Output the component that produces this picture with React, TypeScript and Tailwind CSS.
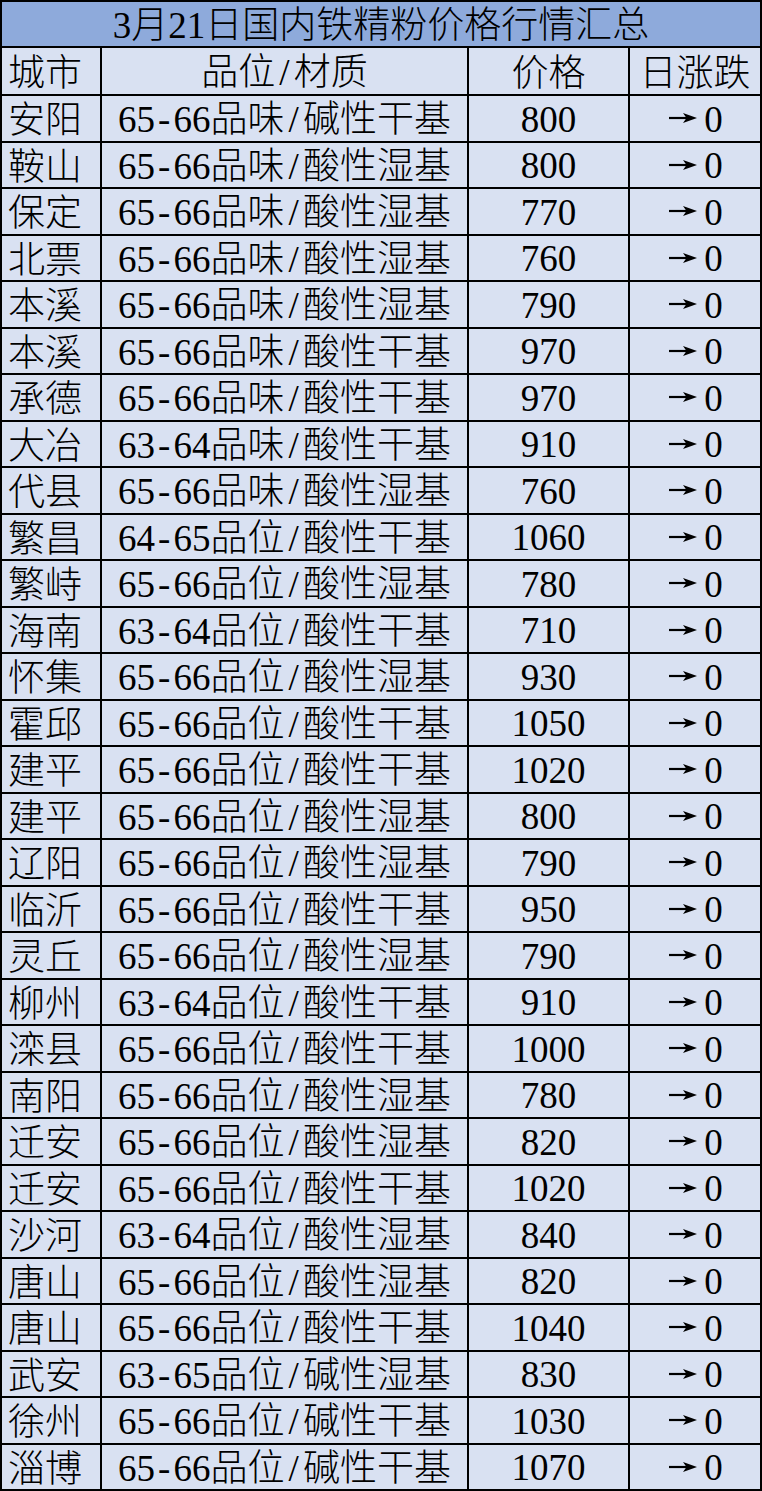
import React from "react";

const rows: [string, string, string][] = [
  ["安阳", "65-66品味/碱性干基", "800"],
  ["鞍山", "65-66品味/酸性湿基", "800"],
  ["保定", "65-66品味/酸性湿基", "770"],
  ["北票", "65-66品味/酸性湿基", "760"],
  ["本溪", "65-66品味/酸性湿基", "790"],
  ["本溪", "65-66品味/酸性干基", "970"],
  ["承德", "65-66品味/酸性干基", "970"],
  ["大冶", "63-64品味/酸性干基", "910"],
  ["代县", "65-66品味/酸性湿基", "760"],
  ["繁昌", "64-65品位/酸性干基", "1060"],
  ["繁峙", "65-66品位/酸性湿基", "780"],
  ["海南", "63-64品位/酸性干基", "710"],
  ["怀集", "65-66品位/酸性湿基", "930"],
  ["霍邱", "65-66品位/酸性干基", "1050"],
  ["建平", "65-66品位/酸性干基", "1020"],
  ["建平", "65-66品位/酸性湿基", "800"],
  ["辽阳", "65-66品位/酸性湿基", "790"],
  ["临沂", "65-66品位/酸性干基", "950"],
  ["灵丘", "65-66品位/酸性湿基", "790"],
  ["柳州", "63-64品位/酸性干基", "910"],
  ["滦县", "65-66品位/酸性干基", "1000"],
  ["南阳", "65-66品位/酸性湿基", "780"],
  ["迁安", "65-66品位/酸性湿基", "820"],
  ["迁安", "65-66品位/酸性干基", "1020"],
  ["沙河", "63-64品位/酸性湿基", "840"],
  ["唐山", "65-66品位/酸性湿基", "820"],
  ["唐山", "65-66品位/酸性干基", "1040"],
  ["武安", "63-65品位/碱性湿基", "830"],
  ["徐州", "65-66品位/碱性干基", "1030"],
  ["淄博", "65-66品位/碱性干基", "1070"],
];

const serif = "font-['Liberation_Serif',serif] font-normal";
const cjk = "font-['Noto_Sans_CJK_SC',sans-serif] font-light";

function Mixed({ s }: { s: string }) {
  const parts: { t: string; latin: boolean }[] = [];
  for (const c of s) {
    const latin = /[0-9\-\/]/.test(c);
    const last = parts[parts.length - 1];
    if (last && last.latin === latin) last.t += c;
    else parts.push({ t: c, latin });
  }
  return (
    <span className="whitespace-nowrap">
      {parts.map((p, i) =>
        p.latin ? (
          <span key={i} className={serif}>
            {p.t.split("").map((c, j) =>
              c === "-" || c === "/" ? (
                <span key={j} className="inline-block w-[0.5em] text-center">
                  {c}
                </span>
              ) : (
                <span key={j}>{c}</span>
              )
            )}
          </span>
        ) : (
          <span key={i} className={cjk}>
            {p.t}
          </span>
        )
      )}
    </span>
  );
}

function Arrow() {
  return (
    <svg width="37" height="20" viewBox="0 0 37 20" className="inline-block shrink-0">
      <line x1="2" y1="10" x2="22" y2="10" stroke="black" strokeWidth="2.2" />
      <path d="M16 5 L30 10 L16 15 L19.5 10 Z" fill="black" />
    </svg>
  );
}

const cell = "bg-[#d9e1f2] flex items-center";

export default function App() {
  return (
    <div className="w-[762px] h-[1491px] bg-black p-[2px] grid grid-cols-[98px_365px_159px_1fr] grid-rows-[44px_46px_repeat(30,1fr)] gap-[2px] text-black text-[37px] leading-none">
      <div className="col-span-4 bg-[#8eaadb] flex items-center justify-center">
        <Mixed s="3月21日国内铁精粉价格行情汇总" />
      </div>
      <div className={`${cell} pl-[6px]`}>
        <Mixed s="城市" />
      </div>
      <div className={`${cell} justify-center`}>
        <Mixed s="品位/材质" />
      </div>
      <div className={`${cell} justify-center`}>
        <Mixed s="价格" />
      </div>
      <div className={`${cell} justify-center`}>
        <Mixed s="日涨跌" />
      </div>
      {rows.map((r, i) => (
        <React.Fragment key={i}>
          <div className={`${cell} pl-[6px]`}>
            <Mixed s={r[0]} />
          </div>
          <div className={`${cell} justify-center`}>
            <Mixed s={r[1]} />
          </div>
          <div className={`${cell} justify-center`}>
            <Mixed s={r[2]} />
          </div>
          <div className={`${cell} justify-center`}>
            <Arrow />
            <Mixed s="0" />
          </div>
        </React.Fragment>
      ))}
    </div>
  );
}
